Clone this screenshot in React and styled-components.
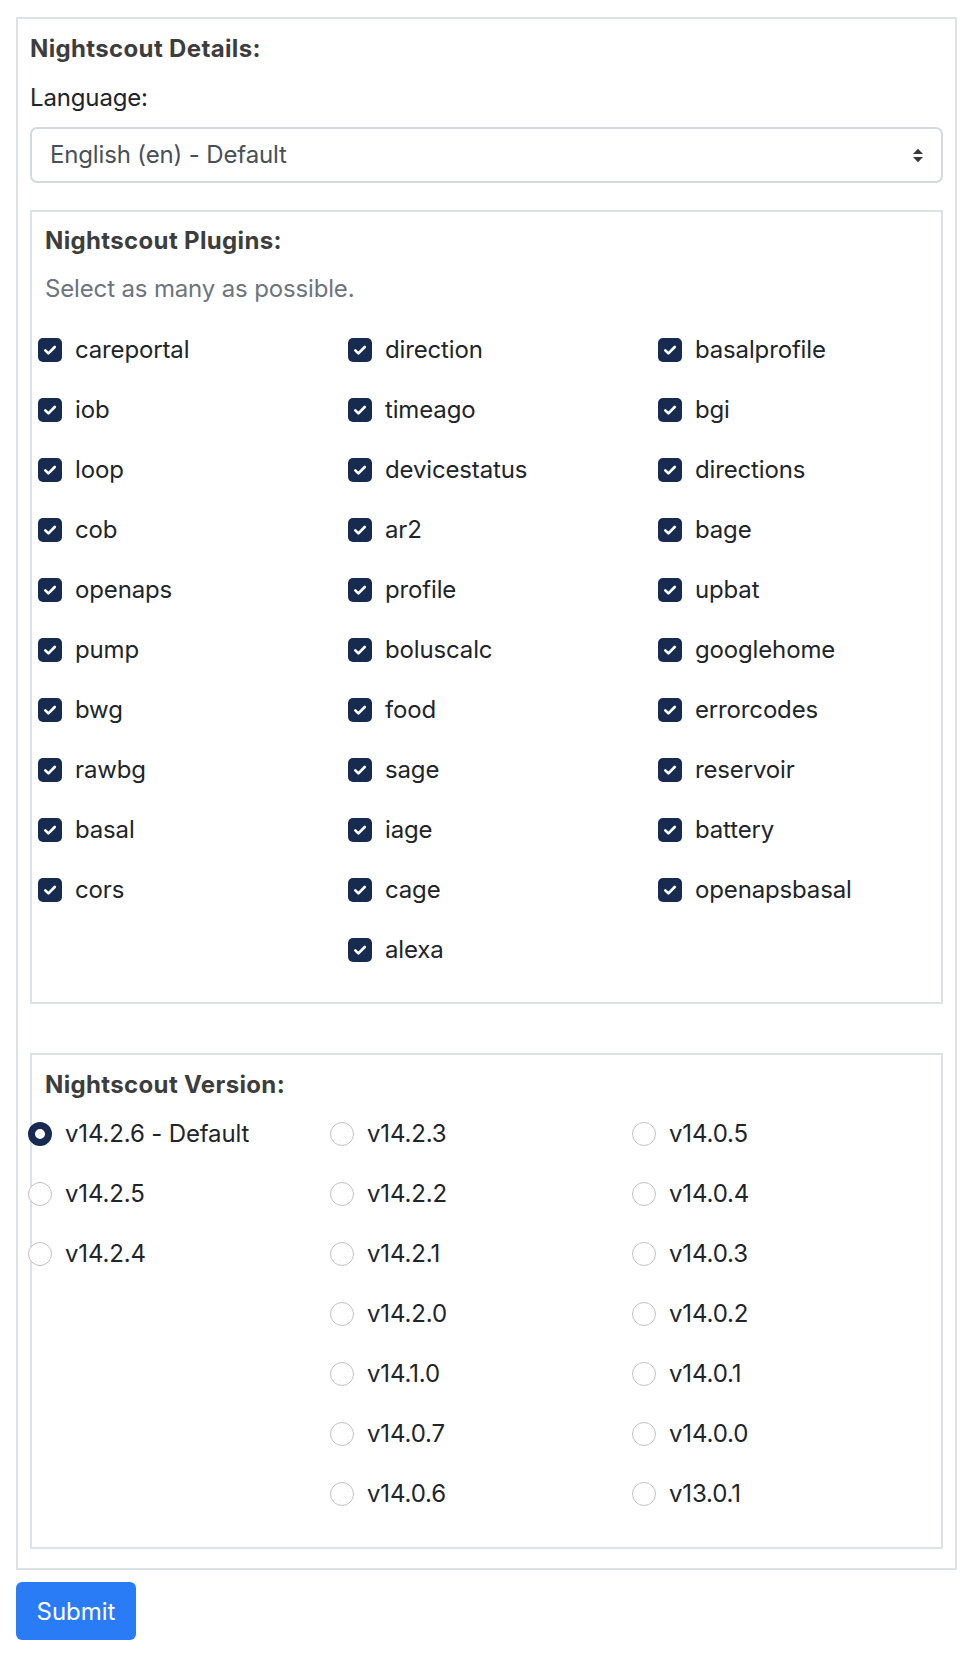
import React, { useState } from "react";
import styled, { createGlobalStyle } from "styled-components";

const GlobalStyle = createGlobalStyle`
  body {
    margin: 0;
    background: #fff;
    font-family: Inter, "Noto Sans", sans-serif;
    color: #212529;
  }
`;

const Page = styled.div`
  padding: 17px 13px 16px 16px;
  font-size: 24px;
  line-height: 36px;
  letter-spacing: -0.15px;
`;

const Card = styled.form`
  border: 2px solid #dee2e6;
  padding: 12px 12px 19px 12px;
`;

const Title = styled.div`
  font-weight: 700;
  color: #3d3d3d;
  letter-spacing: 0.35px;
`;

const Label = styled.div`
  margin-top: 13px;
`;

const SelectBox = styled.div`
  margin-top: 11px;
  height: 56px;
  box-sizing: border-box;
  border: 2px solid #d5d9de;
  border-radius: 7px;
  display: flex;
  align-items: center;
  justify-content: space-between;
  padding: 0 17px 0 18px;
  color: #495057;
`;

const Fieldset = styled.div`
  border: 2px solid #dee2e6;
  margin-top: ${(p) => p.$top}px;
  padding: ${(p) => p.$pad};
`;

const Hint = styled.div`
  margin-top: 12px;
  color: #6c757d;
`;

const Columns = styled.div`
  display: grid;
  grid-template-columns: repeat(3, ${(p) => p.$col}px);
  margin-left: ${(p) => p.$shift}px;
  margin-top: ${(p) => p.$top}px;
`;

const Column = styled.div`
  display: flex;
  flex-direction: column;
`;

const Item = styled.label`
  height: 60px;
  display: flex;
  align-items: center;
  gap: 13px;
  cursor: pointer;
`;

const CheckBox = styled.span`
  width: 24px;
  height: 24px;
  border-radius: 5px;
  background: ${(p) => (p.$on ? "#172a4f" : "#fff")};
  border: ${(p) => (p.$on ? "none" : "1.5px solid #c5c5c5")};
  box-sizing: border-box;
  display: flex;
  align-items: center;
  justify-content: center;
  flex-shrink: 0;
`;

const Radio = styled.span`
  width: 24px;
  height: 24px;
  border-radius: 50%;
  box-sizing: border-box;
  flex-shrink: 0;
  border: ${(p) => (p.$on ? "7px solid #172a4f" : "1.5px solid #c2c2c2")};
  background: #fff;
`;

const Submit = styled.button`
  margin-top: 12px;
  width: 120px;
  height: 58px;
  border: none;
  border-radius: 6px;
  background: #2a7cf6;
  color: #fff;
  font-family: inherit;
  font-size: 24px;
  padding: 0;
  cursor: pointer;
`;

const pluginCols = [
  ["careportal", "iob", "loop", "cob", "openaps", "pump", "bwg", "rawbg", "basal", "cors"],
  ["direction", "timeago", "devicestatus", "ar2", "profile", "boluscalc", "food", "sage", "iage", "cage", "alexa"],
  ["basalprofile", "bgi", "directions", "bage", "upbat", "googlehome", "errorcodes", "reservoir", "battery", "openapsbasal"],
];

const versionCols = [
  ["v14.2.6 - Default", "v14.2.5", "v14.2.4"],
  ["v14.2.3", "v14.2.2", "v14.2.1", "v14.2.0", "v14.1.0", "v14.0.7", "v14.0.6"],
  ["v14.0.5", "v14.0.4", "v14.0.3", "v14.0.2", "v14.0.1", "v14.0.0", "v13.0.1"],
];

const Check = () => (
  <svg width="24" height="24" viewBox="0 0 24 24">
    <path d="M7.3 12.4l3.1 3 6.3-6.4" fill="none" stroke="#fff" strokeWidth="2.7" strokeLinecap="round" strokeLinejoin="round" />
  </svg>
);

const Arrows = () => (
  <svg width="12" height="15" viewBox="0 0 12 15">
    <path d="M1 6L6 0.8 11 6z" fill="#343a40" />
    <path d="M1 9l5 5.2L11 9z" fill="#343a40" />
  </svg>
);

export default function App() {
  const [checked, setChecked] = useState(() => new Set(pluginCols.flat()));
  const [version, setVersion] = useState("v14.2.6 - Default");

  const toggle = (name) => {
    const next = new Set(checked);
    next.has(name) ? next.delete(name) : next.add(name);
    setChecked(next);
  };

  return (
    <Page>
      <GlobalStyle />
      <Card onSubmit={(e) => e.preventDefault()}>
        <Title>Nightscout Details:</Title>
        <Label>Language:</Label>
        <SelectBox>
          <span>English (en) - Default</span>
          <Arrows />
        </SelectBox>

        <Fieldset $top={27} $pad="11px 13px 22px 13px">
          <Title>Nightscout Plugins:</Title>
          <Hint>Select as many as possible.</Hint>
          <Columns $col={310} $shift={-7} $top={13}>
            {pluginCols.map((col, i) => (
              <Column key={i}>
                {col.map((name) => (
                  <Item key={name} onClick={() => toggle(name)}>
                    <CheckBox $on={checked.has(name)}>{checked.has(name) && <Check />}</CheckBox>
                    {name}
                  </Item>
                ))}
              </Column>
            ))}
          </Columns>
        </Fieldset>

        <Fieldset $top={49} $pad="12px 13px 23px 13px">
          <Title>Nightscout Version:</Title>
          <Columns $col={302} $shift={-17} $top={1}>
            {versionCols.map((col, i) => (
              <Column key={i}>
                {col.map((v) => (
                  <Item key={v} onClick={() => setVersion(v)}>
                    <Radio $on={version === v} />
                    {v}
                  </Item>
                ))}
              </Column>
            ))}
          </Columns>
        </Fieldset>
      </Card>
      <Submit type="button">Submit</Submit>
    </Page>
  );
}
